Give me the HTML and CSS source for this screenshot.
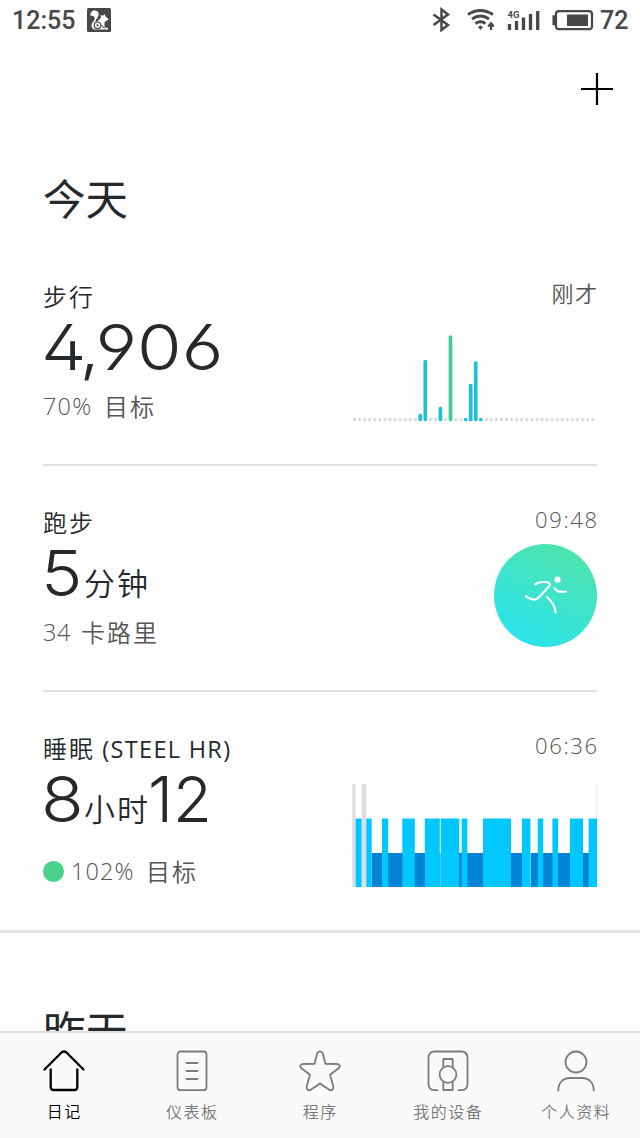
FILE: index.html
```html
<!DOCTYPE html>
<html lang="zh-CN">
<head>
<meta charset="utf-8">
<title>日记</title>
<link rel="stylesheet" href="styles.css">
</head>
<body>
<div class="app">
  <header class="status">
    <span class="clock">12:55</span>
    <svg class="app-badge" width="24" height="24" viewBox="0 0 24 24"><rect width="24" height="24" rx="1.500" fill="#484848"/><path d="M3.500 8C3 4 5.500 2 8.500 2.500c3.500.8 4 4 2 7-1.500 2.500-2.500 3.500-1.500 4.500 2-.5 3-2.500 5-4.500L13.500 7l2.500.7L17.500 6l1 2.500L21.500 11c-.5 2-2.500 1.700-3.500 2.500-1 2.500-.5 4.500 0 6l3 .5v1.500H7c-3-1.500-3.500-5.500-.5-8C8 11.500 8 9.500 7 8.500 6 7.500 4.500 7.500 3.500 8z" fill="#fff"/><circle cx="10.500" cy="17.300" r="3.300" stroke="#484848" stroke-width="1.200" fill="none"/><circle cx="10.500" cy="17.300" r="1.100" fill="#484848"/><path d="M14.500 17q1 2.500 3.500 3" fill="none" stroke="#484848"/></svg>
    <svg class="indicators" width="164" height="26" viewBox="0 0 164 26" fill="none" stroke="#484848">
      <path d="M1.500 7.500 16 18l-6.500 5V2.500L16 7.500 1.500 18" stroke-width="2.500"/>
      <path d="M36 7.500q12-8 25 0M40 12q8.500-6 17 0M43.500 16.500q5-3.500 10 0" stroke-width="2.800"/>
      <path d="m46 20 2.500-1.500L51 20l-2.500 3z" fill="#484848" stroke="none"/>
      <path d="M59 23v-6M56.200 19.500 59 16.200l2.800 3.300" stroke-width="2.200"/>
      <path d="M77.500 23v-6M84.500 23v-9M91.500 23v-12.500M98.500 23V7M105.700 23V4" stroke-width="3.300"/>
      <text class="net" x="75.500" y="10.500">4G</text>
      <rect x="124" y="4.200" width="36" height="18" rx="3" stroke-width="2.200"/>
      <path d="M123 9h-1.800v8.500h1.800z" fill="#484848" stroke-width="1.500"/>
      <path d="M135 7.500h21v11.500h-21z" fill="#484848" stroke="none"/>
    </svg>
    <span class="battery">72</span>
  </header>
  <div class="toolbar">
    <svg width="32" height="32" viewBox="0 0 32 32"><path d="M0 16h32M16 0v32" stroke="#000" stroke-width="2.200"/></svg>
  </div>
  <main class="feed">
    <section class="day">
      <h1>今天</h1>
      <article class="entry">
        <div class="info">
          <h2>步行</h2>
          <p class="value"><b class="count"><span class="thousands">4,</span>906</b></p>
          <p class="sub"><span class="pct">70%</span><em>目标</em></p>
        </div>
        <div class="side">
          <time class="cjk">刚才</time>
          <svg class="steps" width="245" height="90" viewBox="352 333 245 90" fill="none" stroke-linecap="round">
            <path d="M354.500 419.500H594" stroke="#d6d6d8" stroke-width="3.200" stroke-dasharray="0 5.068"/>
            <path d="M420.300 415.500v4M425.300 361.700v57.800M440.400 408.700v10.800M465.600 419.500h.1M470.700 385.700v33.800M475.700 363v56.500M480.800 419.500h.1" stroke="#1fbfd8" stroke-width="3.700"/>
            <path d="M450.500 337.200v82.300" stroke="#45cba3" stroke-width="3.700"/>
          </svg>
        </div>
      </article>
      <article class="entry">
        <div class="info">
          <h2>跑步</h2>
          <p class="value"><b class="lead">5</b><i class="unit">分钟</i></p>
          <p class="sub"><span class="cal">34</span><em>卡路里</em></p>
        </div>
        <div class="side">
          <time>09:48</time>
          <div class="run">
            <svg width="103" height="103" viewBox="494 544 103 103" fill="none" stroke="#fff" stroke-width="2.100" stroke-linecap="round" stroke-linejoin="round"><path d="M535 584.500q4-3.500 12-2.200c3.500.7 3.700 2 1.800 4.200l-10 11q-2.500 2.700-6 2-4.500-.8-7-3.500M554.500 588q2.500 5 11.500 3.500M547 597q7.500 6.500 8.700 15.500"/><circle cx="557.500" cy="579.700" r="3.100" fill="#fff" stroke="none"/></svg>
          </div>
        </div>
      </article>
      <article class="entry sleep">
        <div class="info">
          <h2>睡眠 <span class="model">(STEEL HR)</span></h2>
          <p class="value"><b class="lead">8</b><i class="unit">小时</i><b class="minutes">12</b></p>
          <p class="sub"><span class="dot"></span><span class="goal">102%</span><em>目标</em></p>
        </div>
        <div class="side">
          <time>06:36</time>
          <svg class="phases" width="245" height="103" viewBox="352 784 245 103">
            <path d="M352.300 784h3.300v103h-3.300zM361.700 784h4.600v103h-4.600z" fill="#dcdee1"/>
            <path d="M596.500 784h.5v34h-.5z" fill="#dcdee1"/>
            <path d="M371.700 853H439.800V887H371.700zM440.500 853H530.300V887H440.500zM531 853h58v34h-58z" fill="#0083d7"/>
            <path d="M355.600 818.500h6V887h-6zM366.300 818.500h5.400V887h-5.400zM382 818.500h6.200V887H382zM402.300 818.500h12.500V887h-12.500zM424.800 818.500h15V887h-15zM440.800 818.500h18.400V887h-18.400zM461.700 818.500h5.600V887h-5.600zM483 818.500h28V887h-28zM522 818.500h8.400V887H522zM537.800 818.500h5.400V887h-5.400zM552.400 818.500h5.700V887h-5.700zM570 818.500h13V887h-13zM588.600 818.500h8.400V887h-8.400z" fill="#00c8ff"/>
          </svg>
        </div>
      </article>
    </section>
    <section class="day yesterday"><h1>昨天</h1></section>
  </main>
  <nav class="tabs">
    <a class="tab active"><svg viewBox="0 0 44 44"><path d="m2.500 20.500 17-17q2.500-2 5 0l17 17M8.700 20.500V38q0 3 3 3h20.600q3 0 3-3V20.500"/></svg><span>日记</span></a>
    <a class="tab"><svg viewBox="0 0 44 44"><rect x="7.500" y="2.500" width="29" height="38.700" rx="3"/><path d="M16.500 14h11M16.500 22h11M16.500 30h11"/></svg><span>仪表板</span></a>
    <a class="tab"><svg viewBox="0 0 44 44"><path d="M19.400 3.800 16.600 14.800 4.500 15q-3.300.8-1.700 3.700l9.200 7L8.600 37.800q.1 4.300 3.800 3.200L22 34.400l9.600 6.600q3.700 1.100 3.800-3.200L32 25.700l9.200-7q1.600-2.900-1.700-3.700l-12.100-.2L24.600 3.800q-2.600-2.800-5.200 0z"/></svg><span>程序</span></a>
    <a class="tab"><svg viewBox="0 0 44 44"><path d="M11.500 41.200H9q-6.500 0-6.500-6.500V9Q2.500 2.500 9 2.500h26q6.500 0 6.500 6.500v25.700q0 6.500-6.500 6.500h-2.500M17.300 18v-8h9.400v8M17.300 33v8h9.400v-8"/><circle cx="22" cy="25.500" r="8.400"/></svg><span>我的设备</span></a>
    <a class="tab"><svg viewBox="0 0 44 44"><circle cx="22" cy="13" r="10.500"/><path d="M4.300 41.500C4.300 33.500 9 29 16 29h12c7 0 11.700 4.500 11.700 12.500"/></svg><span>个人资料</span></a>
  </nav>
</div>
</body>
</html>
```

FILE: styles.css
```css
* { box-sizing: border-box; margin: 0; padding: 0; }
body { background: #fff; }
.app {
  width: 640px; height: 1138px; overflow: hidden;
  display: flex; flex-direction: column;
  color: #25292c; background: #fefefe;
  font-family: "Open Sans", "Noto Sans CJK SC", sans-serif;
}
.status {
  height: 40px; flex: none; display: flex; align-items: center;
  padding: 0 12px 0 12px; color: #484848;
  font: 500 25px/40px Roboto, sans-serif;
}
.clock { width: 75px; padding-top: 1px; }
.indicators { margin-left: auto; width: 164px; }
.net { font: 700 9.500px Roboto, sans-serif; fill: #484848; stroke: none; }
.battery { margin-left: 4px; width: 28px; padding-top: 1px; }
.toolbar { height: 100px; flex: none; display: flex; justify-content: flex-end; padding: 33px 27px 0 0; }
.feed { flex: 1; min-height: 0; overflow: hidden; }
h1 { font: 400 42.500px/60px "Noto Sans CJK SC", sans-serif; padding: 27px 0 0 43px; height: 99px; }
.entry {
  height: 226px; margin: 0 43px; padding-top: 40px;
  border-bottom: 2px solid #e2e3e6;
  display: flex; justify-content: space-between;
}
.day .entry:nth-of-type(1) { height: 227px; padding-top: 41px; }
.entry.sleep { height: 238px; border-bottom: 0; }
h2 { font: 350 24px/32px "Noto Sans CJK SC", sans-serif; height: 34px; letter-spacing: 2px; white-space: nowrap; }
.model { font: 400 23.500px/32px "Open Sans", sans-serif; letter-spacing: 1.300px; }
.value { height: 68px; display: flex; align-items: baseline; line-height: 62px; white-space: nowrap; }
.value b { font: 300 63.500px/65px Inter, sans-serif; font-feature-settings: "cv02", "cv03", "cv04"; }
.count { transform: scaleX(1.140); transform-origin: 0 50%; margin-left: -2px; }
.thousands { letter-spacing: -4px; }
.value .lead { width: 41px; margin-left: -2px; transform: scaleX(1.100); transform-origin: 0 50%; }
.unit { font: 350 31px/40px "Noto Sans CJK SC", sans-serif; letter-spacing: 2px; margin-left: 2px; transform: translateY(-1px); }
.minutes { margin-left: -2px; }
.sub { display: flex; align-items: center; height: 48px; color: #545454; font-size: 23.500px; font-weight: 300; white-space: nowrap; }
.sub em { font: 350 24px/34px "Noto Sans CJK SC", sans-serif; letter-spacing: 2px; }
.sub span:not(.dot) { display: inline-block; }
.pct { width: 61px; letter-spacing: 1.200px; }
.cal { width: 38px; letter-spacing: .5px; }
.goal { width: 75px; letter-spacing: 1.100px; }
.dot { width: 21px; height: 21px; border-radius: 50%; background: #49d38a; margin-right: 7px; }
.sleep .sub { margin-top: 13px; }
.side { display: flex; flex-direction: column; align-items: flex-end; width: 245px; }
time { font-size: 22px; font-weight: 300; line-height: 26px; letter-spacing: 1.600px; margin-right: -1.600px; color: #545454; }
.cjk { font: 350 22px/24px "Noto Sans CJK SC", sans-serif; height: 26px; }
.side svg { display: block; }
.steps { margin-top: 27px; }
.run { width: 103px; height: 103px; margin-top: 12px; border-radius: 50%; background: linear-gradient(210deg, #50e3ac 10%, #2ce4e8 85%); }
.phases { margin-top: 26px; }
.yesterday { border-top: 3px solid #e2e3e6; }
.yesterday h1 { padding-top: 66px; height: 130px; }
.tabs { flex: none; height: 107px; border-top: 2px solid #dedee0; background: #fafafa; display: flex; }
.tab { width: 128px; display: flex; flex-direction: column; align-items: center; padding-top: 16px; color: #777; }
.tab svg { width: 44px; height: 44px; fill: none; stroke: #7c7c7c; stroke-width: 1.800; stroke-linecap: round; stroke-linejoin: round; }
.tab span { font: 350 16px/24px "Noto Sans CJK SC", sans-serif; margin-top: 6px; letter-spacing: 1.500px; margin-right: -.5px; }
.tab.active { color: #000; }
.active svg { stroke: #000; stroke-width: 2.300; }
```
